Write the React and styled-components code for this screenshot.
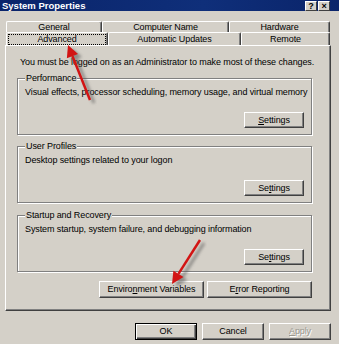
import React from "react";
import styled, { createGlobalStyle } from "styled-components";

const GlobalStyle = createGlobalStyle`
  body {
    margin: 0;
    background: #d4d0c8;
    font-family: "Liberation Sans", Arial, sans-serif;
    font-size: 9px;
    letter-spacing: -0.1px;
    color: #000;
  }
`;

const Window = styled.div`
  position: relative;
  width: 339px;
  height: 344px;
  overflow: hidden;
  background: #d4d0c8;
  display: flex;
  flex-direction: column;
`;

const TitleBar = styled.div`
  height: 11px;
  background: linear-gradient(90deg, #0a246a 0%, #0f2f7a 60%, #0a246a 100%);
  display: flex;
  align-items: flex-end;
  justify-content: space-between;
  padding: 0 9px 0 2px;
`;

const Title = styled.span`
  color: #fff;
  font-weight: bold;
  font-size: 9.5px;
  letter-spacing: 0;
  line-height: 11px;
`;

const TitleButtons = styled.div`
  display: flex;
  gap: 1px;
  align-self: flex-start;
  margin-top: 1px;
`;

const TitleButton = styled.div`
  width: 10px;
  height: 8px;
  background: #d4d0c8;
  border: 1px solid;
  border-color: #fff #404040 #404040 #fff;
  font-size: 9px;
  font-weight: bold;
  line-height: 8px;
  text-align: center;
`;

const TabStrip = styled.div`
  margin: 10px 0 0 6px;
  width: 324px;
`;

const TabRow = styled.div`
  display: flex;
  height: ${(p) => p.$h}px;
`;

const Tab = styled.div`
  box-sizing: border-box;
  width: ${(p) => p.$w}px;
  border-top: 1px solid #fff;
  border-left: 1px solid #fff;
  border-right: 1px solid #404040;
  box-shadow: inset -1px 0 #808080;
  border-radius: 2px 2px 0 0;
  display: flex;
  align-items: center;
  justify-content: center;
  line-height: 11px;
  padding: ${(p) => (p.$focus ? "1px 1px 0 1px" : "0")};
`;

const Focus = styled.div`
  flex: 1;
  align-self: stretch;
  border: 1px dotted #000;
  display: flex;
  align-items: center;
  justify-content: center;
`;

const Panel = styled.div`
  box-sizing: border-box;
  margin-left: 5px;
  width: 326px;
  height: 266px;
  border: 1px solid;
  border-color: #fff #404040 #404040 #fff;
  box-shadow: inset -1px -1px #808080;
  padding: 10px 18px 0 11px;
  display: flex;
  flex-direction: column;
`;

const Intro = styled.div`
  line-height: 13px;
  margin-left: 3px;
  white-space: nowrap;
`;

const Group = styled.div`
  box-sizing: border-box;
  height: 57px;
  margin-top: ${(p) => p.$top}px;
  border: 1px solid #808080;
  box-shadow: inset 1px 1px #fff, 1px 1px #fff;
  padding: 0 7px 6px 7px;
  display: flex;
  flex-direction: column;
`;

const Legend = styled.span`
  align-self: flex-start;
  margin-top: -7px;
  line-height: 13px;
  background: #d4d0c8;
  padding: 0 1px;
`;

const Desc = styled.div`
  line-height: 13px;
  margin-top: 1px;
  white-space: nowrap;
`;

const ButtonRow = styled.div`
  display: flex;
  justify-content: flex-end;
  gap: ${(p) => p.$gap || 0}px;
  margin-top: ${(p) => p.$top}px;
`;

const Button = styled.div`
  box-sizing: border-box;
  width: ${(p) => p.$w}px;
  height: ${(p) => p.$h || 16}px;
  border: 1px solid;
  border-color: ${(p) =>
    p.$default ? "#000" : "#fff #404040 #404040 #fff"};
  box-shadow: ${(p) =>
    p.$default
      ? "inset 1px 1px #fff, inset -1px -1px #404040, inset -2px -2px #808080"
      : "inset -1px -1px #808080"};
  display: flex;
  align-items: center;
  justify-content: center;
  line-height: 11px;
  color: ${(p) => (p.$disabled ? "#9a9890" : "#000")};
  text-shadow: ${(p) => (p.$disabled ? "1px 1px #fff" : "none")};
  white-space: nowrap;
`;

const Footer = styled.div`
  display: flex;
  justify-content: flex-end;
  gap: 5px;
  margin: 12px 8px 0 0;
`;

const Arrows = styled.svg`
  position: absolute;
  left: 0;
  top: 0;
  pointer-events: none;
`;

const groups = [
  { title: "Performance", text: "Visual effects, processor scheduling, memory usage, and virtual memory", key: "S", rest: "ettings", pre: "", top: 9 },
  { title: "User Profiles", text: "Desktop settings related to your logon", pre: "Se", key: "t", rest: "tings", top: 11 },
  { title: "Startup and Recovery", text: "System startup, system failure, and debugging information", pre: "Se", key: "t", rest: "tings", top: 12 },
];

function Arrow({ x1, y1, x2, y2 }) {
  const dx = x2 - x1;
  const dy = y2 - y1;
  const len = Math.hypot(dx, dy);
  const ux = dx / len;
  const uy = dy / len;
  const bx = x2 - ux * 12;
  const by = y2 - uy * 12;
  const px = -uy * 6;
  const py = ux * 6;
  const head = `${x2},${y2} ${bx + px},${by + py} ${bx - px},${by - py}`;
  return (
    <g>
      <g filter="url(#blur)" opacity="0.55">
        <line x1={x1 + 4} y1={y1 + 3} x2={bx + 4} y2={by + 3} stroke="#555" strokeWidth="3" />
        <polygon points={head} fill="#555" transform="translate(4 3)" />
      </g>
      <line x1={x1} y1={y1} x2={bx} y2={by} stroke="#d21414" strokeWidth="2.5" />
      <polygon points={head} fill="#d21414" />
    </g>
  );
}

export default function App() {
  return (
    <Window>
      <GlobalStyle />
      <TitleBar>
        <Title>System Properties</Title>
        <TitleButtons>
          <TitleButton>?</TitleButton>
          <TitleButton>×</TitleButton>
        </TitleButtons>
      </TitleBar>
      <TabStrip>
        <TabRow $h={11}>
          <Tab $w={96}>General</Tab>
          <Tab $w={127}>Computer Name</Tab>
          <Tab $w={101}>Hardware</Tab>
        </TabRow>
        <TabRow $h={13}>
          <Tab $w={102} $focus>
            <Focus>Advanced</Focus>
          </Tab>
          <Tab $w={133}>Automatic Updates</Tab>
          <Tab $w={89}>Remote</Tab>
        </TabRow>
      </TabStrip>
      <Panel>
        <Intro>You must be logged on as an Administrator to make most of these changes.</Intro>
        {groups.map((g) => (
          <Group key={g.title} $top={g.top}>
            <Legend>{g.title}</Legend>
            <Desc>{g.text}</Desc>
            <ButtonRow $top={13}>
              <Button $w={60}>
                {g.pre}
                <u>{g.key}</u>
                {g.rest}
              </Button>
            </ButtonRow>
          </Group>
        ))}
        <ButtonRow $top={9} $gap={3}>
          <Button $w={105} $h={17}>
            Enviro<u>n</u>ment Variables
          </Button>
          <Button $w={105} $h={17}>
            E<u>r</u>ror Reporting
          </Button>
        </ButtonRow>
      </Panel>
      <Footer>
        <Button $w={62} $h={17} $default>OK</Button>
        <Button $w={62} $h={17}>Cancel</Button>
        <Button $w={62} $h={17} $disabled>
          <u>A</u>pply
        </Button>
      </Footer>
      <Arrows width="339" height="344">
        <defs>
          <filter id="blur">
            <feGaussianBlur stdDeviation="1.5" />
          </filter>
        </defs>
        <Arrow x1={90} y1={100} x2={68} y2={45} />
        <Arrow x1={200} y1={240} x2={172} y2={284} />
      </Arrows>
    </Window>
  );
}
